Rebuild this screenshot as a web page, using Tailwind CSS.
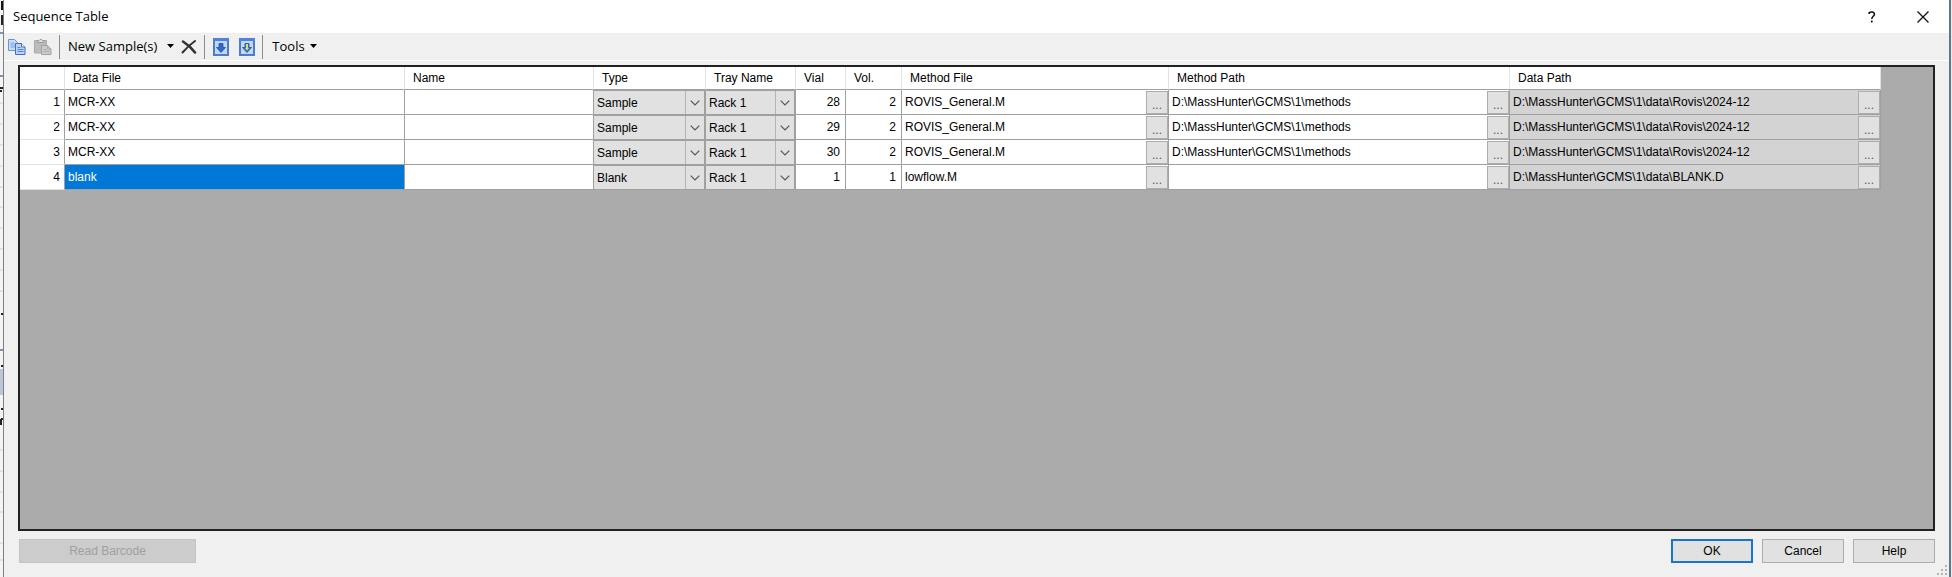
<!DOCTYPE html>
<html lang="en">
<head>
  <meta charset="utf-8">
  <title>Sequence Table</title>
  <script src="https://cdn.jsdelivr.net/npm/@tailwindcss/browser@4"></script>
</head>
<body class="flex h-screen overflow-hidden bg-[#f0f0f0] font-['Liberation_Sans',sans-serif] text-xs text-black">
  <!-- Sliver of the window behind the dialog -->
  <svg class="h-full w-[3px] shrink-0 bg-[#f4f4f4]" aria-hidden="true">
    <path d="M0 103h3M0 124h3M0 145h3M0 166h3M0 187h3M0 207h3M0 228h3M0 249h3M0 270h3M0 291h3M0 450h3M0 471h3M0 492h3M0 512h3M0 543h3M0 560h3" stroke="#d0d0d0" />
    <rect x="1" y="1" width="2" height="9" fill="#111" />
    <path d="M1 16h2M2 16v9M0 88h3M0 91h2M1 314h3M1 366h3M1 409h3M1 419v6M1 419h2" stroke="#222" stroke-width="2" fill="none" />
    <path d="M0 33h3M0 76h3M0 350h3" stroke="#7d93b5" stroke-width="2" />
    <rect y="369" width="3" height="26" fill="#bac7d8" />
  </svg>

  <main class="flex min-w-0 flex-1 flex-col border-l border-[#808080]">
    <header class="flex h-[33px] shrink-0 items-center bg-white pl-[9px] font-['Open_Sans',sans-serif] text-[13px]">
      <h1 class="flex-1">Sequence Table</h1>
      <button class="mr-[35px] grid size-4 place-items-center" aria-label="Help">
        <svg class="h-3 w-2" viewBox="0 0 8 12" fill="none" stroke="#111" stroke-width="1.6"><path d="M1.2 3V1.7C3 .5 6.4.6 6.4 3.2c0 2-2.6 2.2-2.6 4.8M3.8 9.6v1.9" /></svg>
      </button>
      <button class="mr-[18px] grid size-4 place-items-center" aria-label="Close">
        <svg class="size-3" viewBox="0 0 12 12" stroke="#111" stroke-width="1.3"><path d="M.5.5l11 11M11.5.5l-11 11" /></svg>
      </button>
    </header>

    <nav class="flex h-7 shrink-0 items-center border-b border-white bg-[#f0f0f0] pl-1 font-['Open_Sans',sans-serif] text-[13px]">
      <button aria-label="Copy">
        <svg class="h-4 w-[18px]" viewBox="0 0 18 16">
          <path d="M.5.5h6l3 3v8h-9z" fill="#c9dcfa" stroke="#6a93d8" />
          <path d="M2.5 4h4M2.5 6h5M2.5 8h5" stroke="#7da2de" />
          <path d="M7.5 4.500h6l3.500 3.500v7.500H7.500z" fill="#bcd3f8" stroke="#3f6fc4" />
          <path d="M13.500 4.500v3.500H17" fill="#fff" stroke="#3f6fc4" />
          <path d="M9.500 8.500h3M9.500 10.500h6M9.500 12.500h6" stroke="#5485d4" />
        </svg>
      </button>
      <button class="ml-2" aria-label="Paste" disabled>
        <svg class="h-4 w-[18px]" viewBox="0 0 18 16">
          <path d="M.5 1.500h12V14H.5z" fill="#bcbcbc" stroke="#aaa" />
          <path d="M3.500 3.500v-2H5l1-1h1.500l1 1H10v2z" fill="#ddd" stroke="#999" />
          <path d="M7.500 6.500h6L17 10v5.500H7.500z" fill="#cbcbcb" stroke="#a2a2a2" />
          <path d="M13.500 6.500V10H17M9.500 10.500h3M9.500 12.500h6" fill="none" stroke="#aaa" />
        </svg>
      </button>
      <span class="ml-[7px] h-6 w-px bg-[#8d8d8d]"></span>
      <button class="ml-2 flex items-center gap-[10px]">
        New Sample(s)
        <svg class="h-1 w-[7px]" viewBox="0 0 7 4"><path d="M0 0h7L3.500 4z" /></svg>
      </button>
      <button class="ml-[7px]" aria-label="Delete">
        <svg class="h-[14px] w-4" viewBox="0 0 16 14" fill="none" stroke="#333" stroke-linecap="round"><path d="M2 1.500C6 4 11 8.500 14 12.500" stroke-width="2.600" /><path d="M14 1C9 4.500 5 8.500 1.500 12.500" stroke-width="2" /></svg>
      </button>
      <span class="ml-[7px] h-6 w-px bg-[#8d8d8d]"></span>
      <button class="ml-2" aria-label="Fill down">
        <svg class="h-[18px] w-4" viewBox="0 0 16 18">
          <path d="M1 1h14v16H1z" fill="#c3d8f7" stroke="#4f7cc9" stroke-width="2" />
          <path d="M0 0h16v3H0z" fill="#4d83df" />
          <path d="M6 5.500h4v4h2.500L8 14.500 3.500 9.500H6z" fill="#2d67d2" stroke="#1f4fb0" stroke-width=".8" />
        </svg>
      </button>
      <button class="ml-[10px]" aria-label="Fill down increment">
        <svg class="h-[18px] w-4" viewBox="0 0 16 18">
          <path d="M1 1h14v16H1z" fill="#c3d8f7" stroke="#4f7cc9" stroke-width="2" />
          <path d="M0 0h16v3H0z" fill="#4d83df" />
          <path d="M6 5.500h4v4h2.500L8 14.500 3.500 9.500H6z" fill="#3c70c8" stroke="#1f4fb0" stroke-width=".8" />
          <path d="M7 6h2v4h1L8 12.500 6 10h1z" fill="#dbe25a" />
        </svg>
      </button>
      <span class="ml-[7px] h-6 w-px bg-[#8d8d8d]"></span>
      <button class="ml-[9px] flex items-center gap-[5px]">
        Tools
        <svg class="h-1 w-[7px]" viewBox="0 0 7 4"><path d="M0 0h7L3.500 4z" /></svg>
      </button>
    </nav>

    <section class="mx-[14px] mt-1 flex-1 overflow-hidden border-2 border-[#222] bg-[#ababab]">
      <table class="w-[1861px] table-fixed border-separate border-spacing-0 bg-white">
        <colgroup>
          <col class="w-[45px]"><col class="w-[340px]"><col class="w-[189px]"><col class="w-[112px]"><col class="w-[90px]">
          <col class="w-[50px]"><col class="w-[56px]"><col class="w-[267px]"><col class="w-[341px]"><col class="w-[371px]">
        </colgroup>
        <thead>
          <tr id="head" class="h-[23px]"></tr>
        </thead>
        <tbody id="rows"></tbody>
      </table>
    </section>

    <footer class="flex h-[46px] shrink-0 items-start gap-[9px] pt-2 pr-[14px] pl-[15px]">
      <button class="h-6 w-[177px] border border-[#c4c4c4] bg-[#cccccc] text-[#a0a0a0]" disabled>Read Barcode</button>
      <span class="flex-1"></span>
      <button class="h-6 w-[82px] border-2 border-[#1874cd] bg-[#e1e1e1]">OK</button>
      <button class="h-6 w-[82px] border border-[#adadad] bg-[#e1e1e1]">Cancel</button>
      <button class="h-6 w-[82px] border border-[#adadad] bg-[#e1e1e1]">Help</button>
    </footer>
  </main>

  <!-- Resize grip -->
  <svg class="absolute right-1 bottom-px size-[11px]" viewBox="0 0 11 11" fill="#b4b4b4" aria-hidden="true">
    <path d="M8 0h2v2H8zM4 4h2v2H4zM8 4h2v2H8zM0 8h2v2H0zM4 8h2v2H4zM8 8h2v2H8z" />
  </svg>
  <div class="w-[3px] shrink-0 border-l-2 border-[#5a7a87] bg-[#e8eef0]"></div>

  <script>
    const columns = ['', 'Data File', 'Name', 'Type', 'Tray Name', 'Vial', 'Vol.', 'Method File', 'Method Path', 'Data Path']
    const methods = 'D:\\MassHunter\\GCMS\\1\\methods'
    const data = 'D:\\MassHunter\\GCMS\\1\\data\\'
    const rows = [
      ['MCR-XX', '', 'Sample', 'Rack 1', 28, 2, 'ROVIS_General.M', methods, data + 'Rovis\\2024-12'],
      ['MCR-XX', '', 'Sample', 'Rack 1', 29, 2, 'ROVIS_General.M', methods, data + 'Rovis\\2024-12'],
      ['MCR-XX', '', 'Sample', 'Rack 1', 30, 2, 'ROVIS_General.M', methods, data + 'Rovis\\2024-12'],
      ['blank', '', 'Blank', 'Rack 1', 1, 1, 'lowflow.M', '', data + 'BLANK.D']
    ]

    const line = 'border-r border-b border-[#a0a0a0] p-0'

    function textCell (value, selected) {
      return `<td class="${line} ${selected ? 'bg-[#0078d7] text-white' : ''}"><div class="pl-[3px]">${value}</div></td>`
    }

    function numberCell (value) {
      return `<td class="${line} pr-[5px] text-right">${value}</td>`
    }

    function selectCell (value, label) {
      return `<td class="${line} bg-[#e1e1e1]">
        <div class="relative h-6 border-t border-r border-[#a0a0a0]">
          <select aria-label="${label}" class="block h-full w-full appearance-none bg-[#e1e1e1] pl-[3px]"><option>${value}</option></select>
          <span class="pointer-events-none absolute inset-y-0 right-0 grid w-[19px] place-items-center border-l border-[#b4b4b4]">
            <svg class="h-[6px] w-[10px]" viewBox="0 0 10 6" fill="none" stroke="#555" stroke-width="1.200"><path d="M.7.700L5 5 9.300.700" /></svg>
          </span>
        </div>
      </td>`
    }

    function browseCell (value, locked) {
      return `<td class="${line} ${locked ? 'bg-[#d3d3d3]' : ''}">
        <div class="flex h-6 items-center pl-[3px]">
          <span class="flex-1">${value}</span>
          <button aria-label="Browse" class="mt-px h-[23px] w-[22px] border border-[#adadad] bg-[#e1e1e1] pt-1 text-[#555]">...</button>
        </div>
      </td>`
    }

    document.getElementById('head').innerHTML = columns.map(c =>
      `<th class="border-r border-b border-r-[#e2e2e2] border-b-[#a0a0a0] p-0 pl-2 text-left font-normal">${c}</th>`
    ).join('')

    document.getElementById('rows').innerHTML = rows.map((r, i) => `<tr class="h-[25px]">
      <th class="border-r border-b border-r-[#a0a0a0] border-b-[#e2e2e2] p-0 pr-1 text-right font-normal">${i + 1}</th>
      ${textCell(r[0], i === 3)}${textCell(r[1])}
      ${selectCell(r[2], 'Type')}${selectCell(r[3], 'Tray Name')}
      ${numberCell(r[4])}${numberCell(r[5])}
      ${browseCell(r[6])}${browseCell(r[7])}${browseCell(r[8], true)}
    </tr>`).join('')
  </script>
</body>
</html>
